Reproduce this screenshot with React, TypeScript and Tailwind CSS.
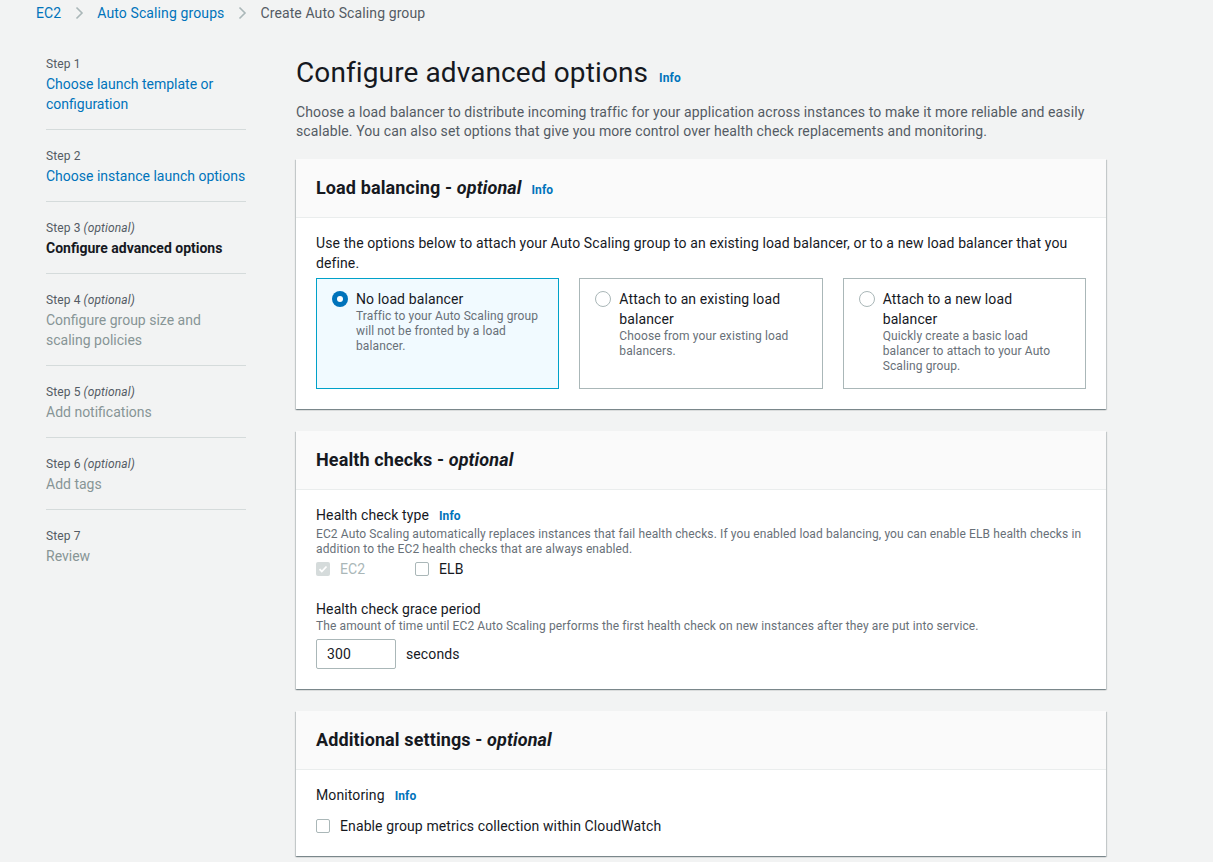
import React from 'react';

interface NavStep {
    label: string;
    optional?: boolean;
    title: string;
    state: 'link' | 'current' | 'disabled';
}

const steps: NavStep[] = [
    { label: 'Step 1', title: 'Choose launch template or configuration', state: 'link' },
    { label: 'Step 2', title: 'Choose instance launch options', state: 'link' },
    { label: 'Step 3', optional: true, title: 'Configure advanced options', state: 'current' },
    { label: 'Step 4', optional: true, title: 'Configure group size and scaling policies', state: 'disabled' },
    { label: 'Step 5', optional: true, title: 'Add notifications', state: 'disabled' },
    { label: 'Step 6', optional: true, title: 'Add tags', state: 'disabled' },
    { label: 'Step 7', title: 'Review', state: 'disabled' },
];

// line breaks follow the console's wrapping
const tiles = [
    {
        title: ['No load balancer'],
        desc: ['Traffic to your Auto Scaling group', 'will not be fronted by a load', 'balancer.'],
        selected: true,
    },
    {
        title: ['Attach to an existing load', 'balancer'],
        desc: ['Choose from your existing load', 'balancers.'],
        selected: false,
    },
    {
        title: ['Attach to a new load', 'balancer'],
        desc: ['Quickly create a basic load', 'balancer to attach to your Auto', 'Scaling group.'],
        selected: false,
    },
];

const Chevron = () => (
    <svg className="w-[10px] h-[14px] mx-[13px]" viewBox="0 0 10 14" fill="none">
        <path d="M2.5 1.5l5.5 5.5-5.5 5.5" stroke="#aab7b8" strokeWidth={1.6} />
    </svg>
);

const Info = ({ className = '' }: { className?: string }) => (
    <span className={`text-[12px] font-bold text-[#0073bb] ${className}`}>Info</span>
);

const Card = ({ title, info, children }: { title: string; info?: boolean; children: React.ReactNode }) => (
    <div className="bg-white shadow-[0_1px_1px_0_rgba(0,28,36,0.3),1px_1px_1px_0_rgba(0,28,36,0.15),-1px_1px_1px_0_rgba(0,28,36,0.15)]">
        {/* Header */}
        <div className="bg-[#fafafa] border-b border-[#eaeded] px-5 py-[18px] flex items-baseline">
            <span className="text-[18px] leading-[22px] font-bold text-[#16191f]">
                {title} - <i>optional</i>
            </span>
            {info && <Info className="ml-[10px]" />}
        </div>
        <div className="px-5 pt-[15px] pb-5">{children}</div>
    </div>
);

const Checkbox = ({ checked, disabled }: { checked?: boolean; disabled?: boolean }) => (
    <span
        className={`w-[14px] h-[14px] rounded-[2px] flex items-center justify-center shrink-0 ${
            disabled ? 'bg-[#d5dbdb]' : 'border border-[#aab7b8] bg-white'
        }`}
    >
        {checked && (
            <svg className="w-[10px] h-[10px]" viewBox="0 0 10 10" fill="none">
                <path d="M1.5 5.2l2.3 2.3 4.7-5" stroke="white" strokeWidth={1.8} />
            </svg>
        )}
    </span>
);

export default function App() {
    return (
        <div className="min-h-screen bg-[#f2f3f3] font-[Roboto,sans-serif] text-[14px] tracking-[0.11px] text-[#16191f]">
            {/* Breadcrumbs */}
            <div className="flex items-center pl-[36px] pt-[3px] h-[23px] leading-5">
                <span className="text-[#0073bb]">EC2</span>
                <Chevron />
                <span className="text-[#0073bb]">Auto Scaling groups</span>
                <Chevron />
                <span className="text-[#545b64]">Create Auto Scaling group</span>
            </div>

            <div className="flex pt-[15px]">
                {/* Side navigation */}
                <nav className="ml-[46px] w-[200px] shrink-0">
                    {steps.map((step, i) => (
                        <div
                            key={step.label}
                            className={`pt-[18px] pb-[15px] ${i < steps.length - 1 ? 'border-b border-[#d5dbdb]' : ''}`}
                        >
                            <div className="text-[12px] leading-4 text-[#545b64]">
                                {step.label}
                                {step.optional && <i> (optional)</i>}
                            </div>
                            <div
                                className={`mt-[2px] leading-5 tracking-normal ${
                                    step.state === 'link'
                                        ? 'text-[#0073bb]'
                                        : step.state === 'current'
                                        ? 'font-bold text-[#16191f]'
                                        : 'text-[#879596]'
                                }`}
                            >
                                {step.title}
                            </div>
                        </div>
                    ))}
                </nav>

                {/* Main content */}
                <main className="ml-[50px] w-[810px] shrink-0 pt-[17px] pb-10">
                    <div className="flex items-baseline">
                        <h1 className="text-[28px] leading-9 font-normal">Configure advanced options</h1>
                        <Info className="ml-[11px]" />
                    </div>
                    <p className="mt-3 leading-[19px] text-[#545b64]">
                        Choose a load balancer to distribute incoming traffic for your application across instances to make
                        it more reliable and easily scalable. You can also set options that give you more control over
                        health check replacements and monitoring.
                    </p>

                    <div className="mt-[18px] flex flex-col gap-[22px]">
                        {/* Load balancing */}
                        <Card title="Load balancing" info>
                            <p className="leading-5">
                                Use the options below to attach your Auto Scaling group to an existing load balancer, or to a
                                new load balancer that you define.
                            </p>
                            <div className="mt-[5px] grid grid-cols-3 gap-5">
                                {tiles.map((tile) => (
                                    <div
                                        key={tile.title.join(' ')}
                                        className={`border pl-[15px] pr-3 pt-[10px] pb-[14px] flex gap-2 h-[111px] ${
                                            tile.selected
                                                ? 'border-[#00a1c9] bg-[#f1faff]'
                                                : 'border-[#aab7b8] bg-white'
                                        }`}
                                    >
                                        <span className="mt-[2px] shrink-0">
                                            {tile.selected ? (
                                                <span className="w-4 h-4 rounded-full bg-[#0073bb] flex items-center justify-center">
                                                    <span className="w-[6px] h-[6px] rounded-full bg-white" />
                                                </span>
                                            ) : (
                                                <span className="block w-4 h-4 rounded-full border-[1.5px] border-[#aab7b8] bg-white" />
                                            )}
                                        </span>
                                        <div className="whitespace-nowrap">
                                            {tile.title.map((line) => (
                                                <div key={line} className="leading-5">
                                                    {line}
                                                </div>
                                            ))}
                                            {tile.desc.map((line) => (
                                                <div key={line} className="text-[12px] leading-[15px] text-[#687078]">
                                                    {line}
                                                </div>
                                            ))}
                                        </div>
                                    </div>
                                ))}
                            </div>
                        </Card>

                        {/* Health checks */}
                        <Card title="Health checks">
                            <div className="flex items-baseline leading-5">
                                <span>Health check type</span>
                                <Info className="ml-[10px]" />
                            </div>
                            <p className="mt-[1px] text-[12px] leading-[15px] text-[#687078]">
                                EC2 Auto Scaling automatically replaces instances that fail health checks. If you enabled
                                load balancing, you can enable ELB health checks in
                                <br />
                                addition to the EC2 health checks that are always enabled.
                            </p>
                            <div className="mt-[2px] flex items-center h-5">
                                <label className="flex items-center gap-[10px] w-[99px]">
                                    <Checkbox checked disabled />
                                    <span className="text-[#aab7b8]">EC2</span>
                                </label>
                                <label className="flex items-center gap-[10px]">
                                    <Checkbox />
                                    <span>ELB</span>
                                </label>
                            </div>

                            <div className="mt-5 leading-5">Health check grace period</div>
                            <p className="text-[12px] leading-[15px] text-[#687078]">
                                The amount of time until EC2 Auto Scaling performs the first health check on new instances
                                after they are put into service.
                            </p>
                            <div className="mt-[5px] flex items-center gap-[10px]">
                                <div className="w-[80px] h-[30px] border border-[#aab7b8] rounded-[2px] bg-white px-[10px] leading-7">
                                    300
                                </div>
                                <span>seconds</span>
                            </div>
                        </Card>

                        {/* Additional settings */}
                        <Card title="Additional settings">
                            <div className="flex items-baseline leading-5">
                                <span>Monitoring</span>
                                <Info className="ml-[10px]" />
                            </div>
                            <label className="mt-[10px] flex items-center gap-[10px] h-5">
                                <Checkbox />
                                <span>Enable group metrics collection within CloudWatch</span>
                            </label>
                        </Card>
                    </div>
                </main>
            </div>
        </div>
    );
}
